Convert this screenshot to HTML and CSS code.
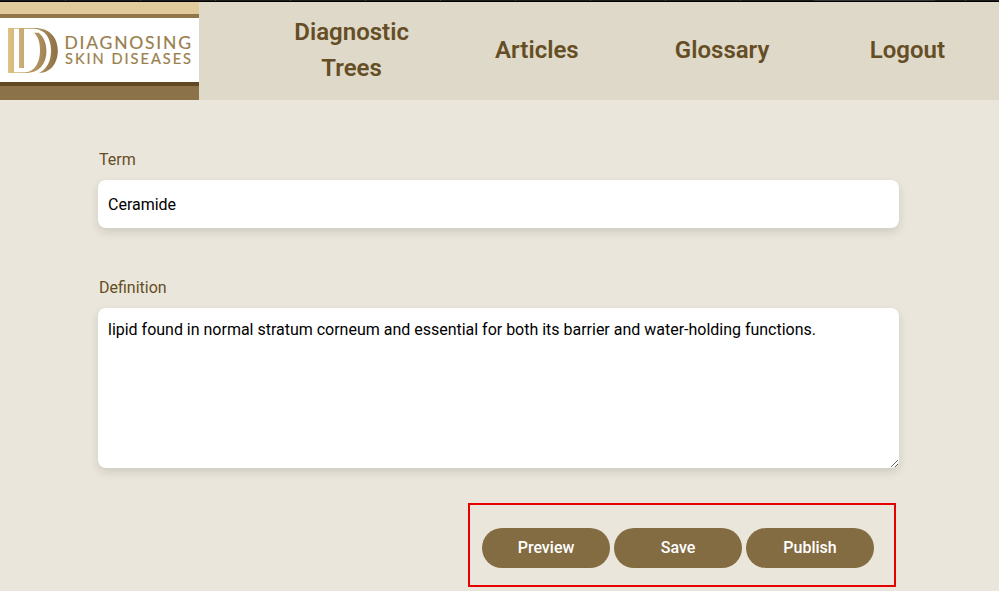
FILE: index.html
```html
<!DOCTYPE html>
<html lang="en">
<head>
<meta charset="utf-8">
<title>Glossary term</title>
<link rel="stylesheet" href="styles.css">
</head>
<body>
<div class="topline"></div>
<header class="header">
  <a class="logo">
    <span class="band band-top"></span>
    <svg class="brand" width="199" height="64" viewBox="0 18 199 64">
      <defs>
        <linearGradient id="gold" gradientUnits="userSpaceOnUse" x1="8" y1="0" x2="58" y2="0">
          <stop offset="0" stop-color="#dfc385"/>
          <stop offset="1" stop-color="#8c7043"/>
        </linearGradient>
      </defs>
      <g fill="url(#gold)">
        <path d="M8 28h6v45H8z"/>
        <path d="M19 28h5v40h-5z"/>
        <path d="M8 28H36V28.800H8Z"/>
        <path d="M34 32.800H38.500C43.500 36.500 46.400 43 46.400 51C46.400 64 39 73 26 73H8V72.200H25C35 72 40 62 40 50.500C40 43 38.500 37 34 32.800Z"/>
        <path d="M35 28C49 28 57.800 37 57.800 50.500S50 73 39 72.800C47 69 51 61 51 50.500C51 38 45 30 35 28.800Z"/>
      </g>
      <g class="brand-text">
        <text class="line-one" x="64.500" y="48.500" textLength="126.500">DIAGNOSING</text>
        <text class="line-two" x="65" y="63.800" textLength="126">SKIN DISEASES</text>
      </g>
    </svg>
    <span class="band band-bottom"></span>
  </a>
  <nav class="nav">
    <a>Diagnostic<br>Trees</a>
    <a>Articles</a>
    <a>Glossary</a>
    <a>Logout</a>
  </nav>
</header>
<main class="form">
  <label class="label" for="term">Term</label>
  <input class="field" id="term" value="Ceramide">
  <label class="label" for="definition">Definition</label>
  <textarea class="field area" id="definition" spellcheck="false">lipid found in normal stratum corneum and essential for both its barrier and water-holding functions.</textarea>
  <div class="actions">
    <button class="button">Preview</button>
    <button class="button">Save</button>
    <button class="button">Publish</button>
  </div>
</main>
</body>
</html>
```
FILE: styles.css
```css
* { box-sizing: border-box; }
body {
  margin: 0;
  height: 591px;
  overflow: hidden;
  background: #eae6db;
  font-family: Roboto, sans-serif;
  color: #654e25;
}
.topline {
  height: 2px;
  border-bottom: 1px solid #000;
  background:
    linear-gradient(#363636, #363636) 814px 0 / 121px 1px no-repeat,
    linear-gradient(90deg, transparent 65px, #484644 65px 66px, transparent 66px) 0 0 / 75px 1px repeat-x,
    #1e1c1a;
}
.header {
  display: flex;
  height: 98px;
  background: #dfd9c9;
}
.logo {
  display: flex;
  flex-direction: column;
  width: 199px;
  background: #fff;
}
.brand { display: block; }
.band { display: block; }
.band-top {
  height: 16px;
  background: #e1cb9c;
  border-bottom: 4px solid #917647;
}
.band-bottom {
  height: 18px;
  background: #8c7249;
  border-top: 4px solid #604823;
}
.brand-text {
  font-family: Lato, sans-serif;
  fill: #9a804d;
  stroke: #9a804d;
  stroke-width: .2px;
}
.line-one { font-size: 17.500px; }
.line-two { font-size: 14.600px; }
.nav {
  flex: 1;
  display: grid;
  grid-template-columns: repeat(4, 1fr);
  align-items: center;
  margin: 0 -1px 0 60px;
  padding-bottom: 2px;
  text-align: center;
  font-size: 24px;
  font-weight: 600;
  line-height: 36px;
}
.form {
  display: flex;
  flex-direction: column;
  width: 801px;
  margin-left: 98px;
  padding-top: 48px;
}
.label {
  height: 24px;
  margin: 0 0 8px 1px;
  font-size: 16px;
  line-height: 24px;
}
.field {
  width: 801px;
  height: 48px;
  margin: 0 0 48px;
  padding: 10px;
  border: 0;
  border-radius: 8px;
  background: #fff;
  box-shadow: 0 4px 10px rgba(0, 0, 0, .12);
  color: #000;
  font: 16px/24px Roboto, sans-serif;
  letter-spacing: -.01px;
  outline: 0;
}
.area {
  height: 160px;
  margin-bottom: 35px;
  resize: both;
}
.actions {
  align-self: flex-end;
  display: flex;
  gap: 4px;
  width: 428px;
  height: 84px;
  margin-right: 3px;
  padding: 23px 12px;
  border: 2px solid #e60000;
}
.button {
  width: 128px;
  height: 40px;
  padding: 0 0 1px;
  border: 0;
  border-radius: 20px;
  background: #846c42;
  color: #fff;
  font: 500 16px/24px Roboto, sans-serif;
}
```
